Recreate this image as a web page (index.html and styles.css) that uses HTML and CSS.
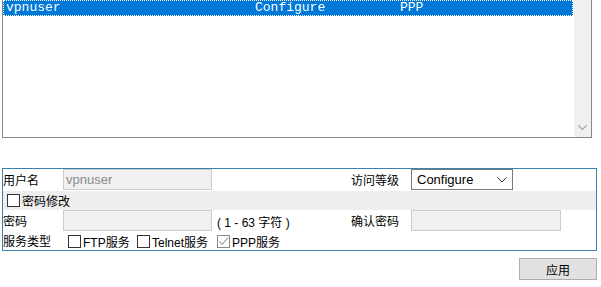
FILE: index.html
```html
<!DOCTYPE html>
<html>
<head>
<meta charset="utf-8">
<link rel="stylesheet" href="styles.css">
</head>
<body>
<div class="listbox">
  <div class="list-rows">
    <div class="row selected"><span class="c1">vpnuser</span><span class="c2">Configure</span><span class="c3">PPP</span></div>
  </div>
  <div class="scrollbar">
    <svg class="arrow" width="9" height="6" viewBox="0 0 9 6"><path d="M0.5 0.5 L4.5 4.5 L8.5 0.5" fill="none" stroke="#a6a6a6" stroke-width="1.2"/></svg>
  </div>
</div>

<div class="panel">
  <div class="grid r1">
    <span class="lbl">用户名</span>
    <span class="input disabled">vpnuser</span>
    <span></span>
    <span class="lbl">访问等级</span>
    <span class="select">Configure<svg class="chev" width="10" height="6" viewBox="0 0 10 6"><path d="M0.5 0.5 L5 5 L9.5 0.5" fill="none" stroke="#333" stroke-width="1"/></svg></span>
  </div>
  <div class="pwdrow">
    <span class="cb"></span><span class="cbl">密码修改</span>
  </div>
  <div class="grid r3">
    <span class="lbl">密码</span>
    <span class="input disabled"></span>
    <span class="hint">( 1 - 63 字符 )</span>
    <span class="lbl">确认密码</span>
    <span class="input disabled"></span>
  </div>
  <div class="svcrow">
    <span class="lbl svclbl">服务类型</span>
    <span class="opt opt-ftp"><span class="cb"></span>FTP服务</span>
    <span class="opt opt-telnet"><span class="cb"></span>Telnet服务</span>
    <span class="opt"><span class="cb checked"><svg width="11" height="11" viewBox="0 0 11 11"><path d="M1.5 5.5 L4 8.5 L10 1.5" fill="none" stroke="#7a7a7a" stroke-width="1"/></svg></span>PPP服务</span>
  </div>
</div>

<div class="actions">
  <span class="btn">应用</span>
</div>
</body>
</html>
```

FILE: styles.css
```css
html, body {
  margin: 0;
  padding: 0;
  background: #ffffff;
  font-family: Arial, "Liberation Sans", "Noto Sans CJK SC", sans-serif;
  font-size: 12px;
  color: #000;
}

.listbox {
  margin: -1px 0 0 2px;
  width: 588px;
  height: 137px;
  border: 1px solid #828790;
  display: flex;
}

.list-rows {
  flex: 1;
}

.row {
  height: 16px;
  font-family: "Liberation Mono", "Courier New", monospace;
  font-size: 13px;
  line-height: 16px;
  white-space: pre;
  display: flex;
  box-sizing: border-box;
}

.row.selected {
  background: #0078d7;
  color: #fff;
  outline: 1px dotted #fff;
  outline-offset: -1px;
  margin-right: 1px;
}

.c1 { padding-left: 3px; width: 249px; }
.c2 { width: 145px; }

.scrollbar {
  width: 17px;
  background: #f0f0f0;
  display: flex;
  flex-direction: column;
  justify-content: flex-end;
  align-items: center;
}

.arrow {
  margin-bottom: 6px;
}

.panel {
  margin: 30px 0 0 2px;
  width: 593px;
  border: 1px solid #3c7fb1;
}

.grid {
  display: grid;
  grid-template-columns: 60px 149px 139px 60px 1fr;
  align-items: center;
}

.r1, .r3 {
  height: 22px;
}

.lbl {
  font-family: "Noto Sans CJK SC", sans-serif;
  font-size: 12px;
  line-height: 16px;
}

.input {
  box-sizing: border-box;
  align-self: start;
  height: 21px;
  border: 1px solid #cccccc;
  background: #f0f0f0;
  font-size: 13px;
  line-height: 19px;
  padding-left: 2px;
  color: #8c8c8c;
}

.r3 .input:last-child { width: 150px; }

.hint {
  font-family: Arial, "Noto Sans CJK SC", sans-serif;
  font-size: 12px;
  padding-left: 5px;
}

.select {
  box-sizing: border-box;
  align-self: start;
  width: 102px;
  height: 21px;
  border: 1px solid #7a7a7a;
  background: #fff;
  font-size: 13px;
  line-height: 19px;
  padding: 0 5px;
  display: flex;
  justify-content: space-between;
  align-items: center;
}

.pwdrow {
  height: 19px;
  background: #eeeeee;
  display: flex;
  align-items: center;
  padding-left: 4px;
  font-family: "Noto Sans CJK SC", sans-serif;
  font-size: 12px;
}

.cb {
  box-sizing: border-box;
  width: 13px;
  height: 13px;
  border: 1px solid #333;
  background: #fff;
  display: inline-flex;
  align-items: center;
  justify-content: center;
  margin-right: 2px;
  flex: none;
}

.cb.checked {
  border-color: #8a8a8a;
}

.cbl {
  line-height: 16px;
}

.svcrow {
  display: flex;
  align-items: center;
  height: 18px;
}

.svclbl {
  width: 65px;
}

.opt {
  display: inline-flex;
  align-items: center;
  font-family: Arial, "Noto Sans CJK SC", sans-serif;
  font-size: 12px;
}

.opt-ftp { width: 69px; }
.opt-telnet { width: 80px; }

.actions {
  display: flex;
  justify-content: flex-end;
  padding: 7px 4px 0 0;
}

.btn {
  box-sizing: border-box;
  width: 78px;
  height: 22px;
  background: #e1e1e1;
  border: 1px solid #adadad;
  font-family: "Noto Sans CJK SC", sans-serif;
  font-size: 12px;
  display: flex;
  align-items: center;
  justify-content: center;
}
```
